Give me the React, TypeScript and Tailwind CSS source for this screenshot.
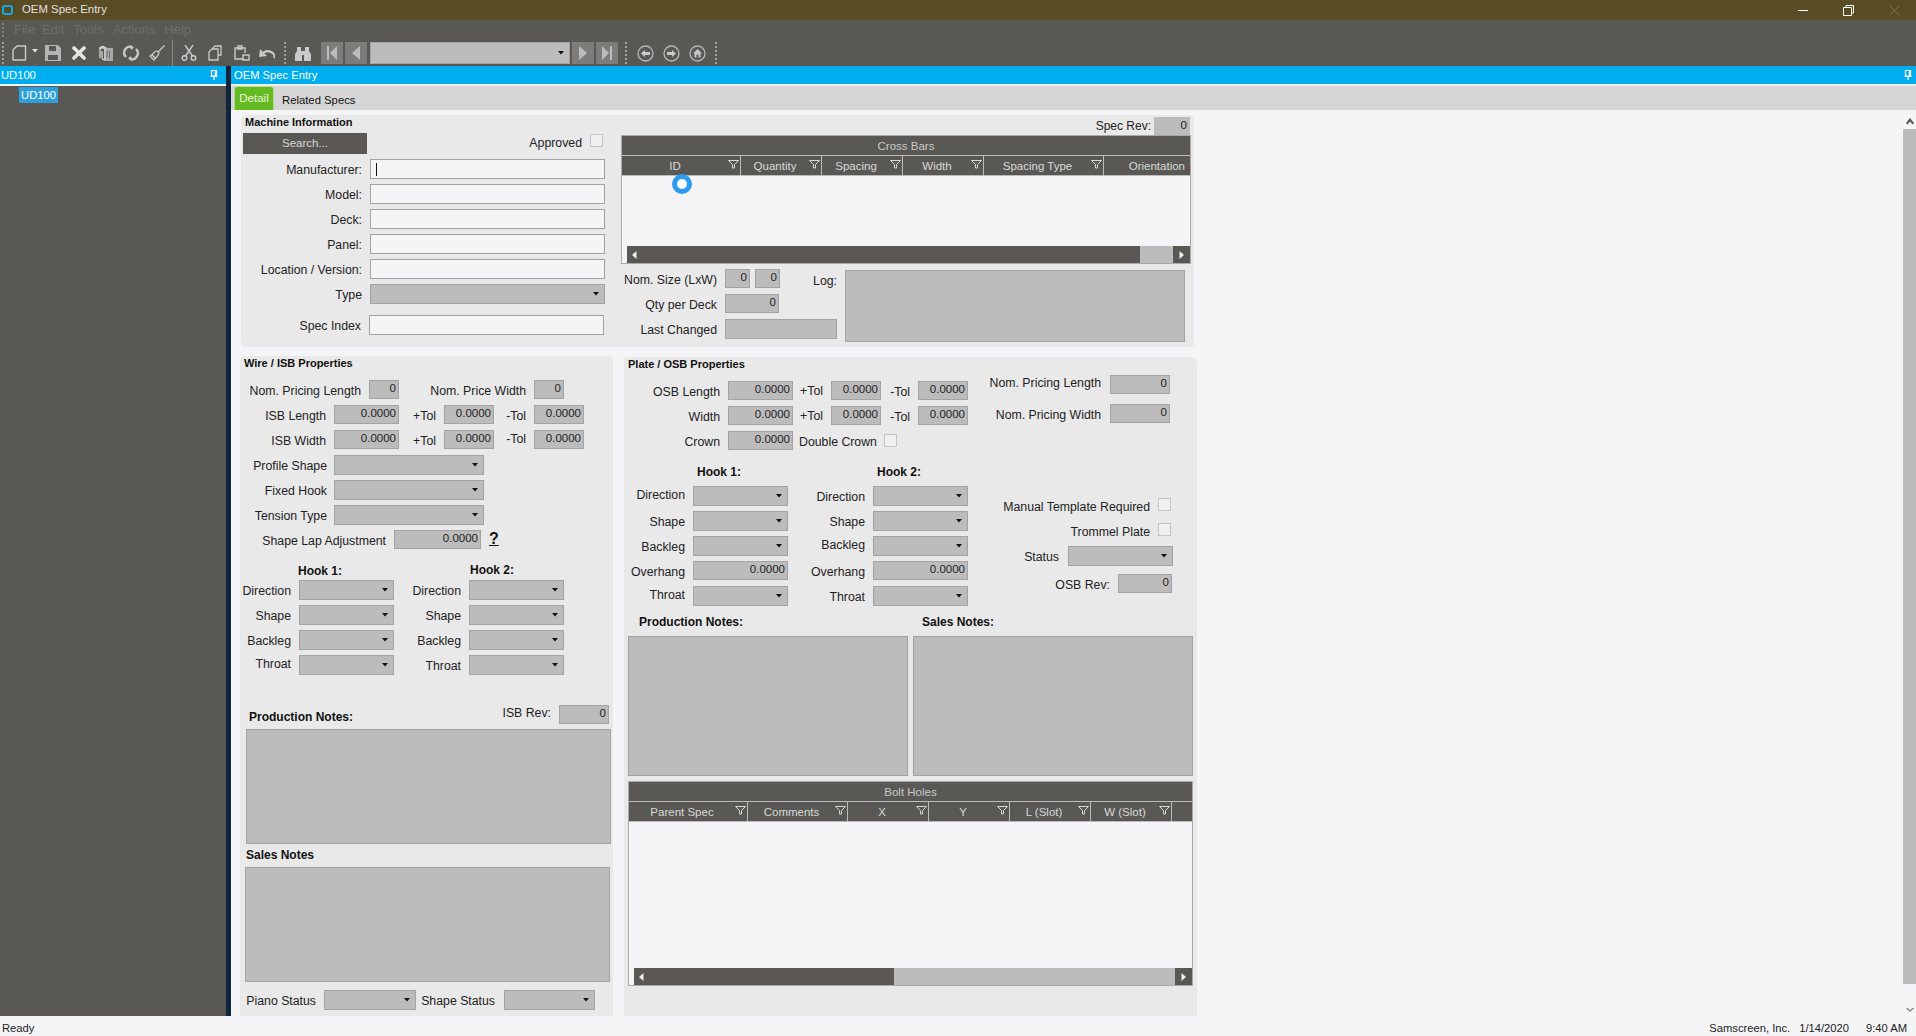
import React from "react";

const boxCls = "bg-[#bcbcbc] border border-[#a3a3a3] shrink-0 flex items-center justify-end pr-[2px] pb-[2px] text-[11.5px] text-[#222]";
const inputCls = "bg-[#f5f5f7] border border-[#a3a3a3] shrink-0 h-[20px]";
const labelCls = "text-right text-[12.3px] leading-[14px] pt-px text-[#222] shrink-0 whitespace-nowrap";
const boldCls = "font-bold text-[12px] leading-[14px] text-[#111] whitespace-nowrap";
const titleCls = "font-bold text-[11px] leading-[14px] text-[#111] whitespace-nowrap";

function Caret() {
  return (
    <svg width="6" height="4" viewBox="0 0 6 4" className="shrink-0">
      <path d="M0 0H6L3 3.5Z" fill="#111" />
    </svg>
  );
}
function Combo({ w }: { w: string }) {
  return (
    <div className={`${w} h-[20px] bg-[#bcbcbc] border border-[#a3a3a3] shrink-0 flex items-center justify-end pr-[5px]`}>
      <Caret />
    </div>
  );
}
function Box({ w, h = "h-[19px]", v }: { w: string; h?: string; v?: string }) {
  return <div className={`${w} ${h} ${boxCls}`}>{v}</div>;
}
function Check() {
  return <div className="w-[13px] h-[13px] bg-[#f0f0f2] border border-[#c4c4c4] shrink-0" />;
}
function Funnel() {
  return (
    <svg width="11" height="9" viewBox="0 0 11 9" className="shrink-0 mr-[1px] mb-[3px]">
      <path d="M.5.5h10L6.5 4.5V8h-2V4.5Z" fill="none" stroke="#d8d8d8" strokeWidth="1" />
    </svg>
  );
}
function Pin() {
  return (
    <svg width="8" height="10" viewBox="0 0 8 10" className="shrink-0">
      <path d="M1.5 .5h5v5.5h-5zM.5 6.5h7M4 6.5V10" fill="none" stroke="#fff" strokeWidth="1.2" />
      <path d="M4.8 1v5h1.4V1Z" fill="#fff" />
    </svg>
  );
}

type Col = { w: string; label: string; filter?: boolean; right?: boolean };

function Grid({ title, cols, cls, darkW, lightW, cursor }: { title: string; cols: Col[]; cls: string; darkW: string; lightW: string; cursor?: boolean }) {
  return (
    <div className={`${cls} border border-[#a9a9a9] flex flex-col shrink-0`}>
      <div className="h-[19px] shrink-0 bg-[#595855] pt-[2px] flex items-center justify-center text-[11.5px] text-[#c9c9c9]">{title}</div>
      <div className="h-[21px] shrink-0 bg-[#595855] border-y border-[#bcbcbc] flex">
        {cols.map((c, i) => (
          <div key={i} className={`${c.w} flex items-center border-r border-[#bcbcbc] last:border-r-0 shrink-0 text-[11.5px] text-[#d8d8d8] whitespace-nowrap`}>
            <span className={c.right ? "flex-1 text-right pr-[5px] pt-[2px]" : "flex-1 text-center pt-[2px]"}>{c.label}</span>
            {c.filter !== false && c.label ? <Funnel /> : null}
          </div>
        ))}
      </div>
      <div className="relative flex-1 bg-[#f5f5f7]">
        {cursor ? <div className="absolute top-[-2px] left-[50px] w-[20px] h-[20px] rounded-full border-[5px] border-[#2b9cf0] bg-white" /> : null}
      </div>
      <div className="h-[17px] shrink-0 flex">
        <div className="w-[5px] bg-[#f5f5f7]" />
        <div className={`${darkW} bg-[#595855] flex items-center pl-[5px]`}>
          <svg width="5" height="8" viewBox="0 0 5 8"><path d="M4.5 0V8L0 4Z" fill="#f0f0f0" /></svg>
        </div>
        <div className={`${lightW} bg-[#bcbcbc]`} />
        <div className="flex-1 bg-[#595855] flex items-center justify-center">
          <svg width="5" height="8" viewBox="0 0 5 8"><path d="M.5 0V8L5 4Z" fill="#f0f0f0" /></svg>
        </div>
      </div>
    </div>
  );
}

function Grip() {
  return <div className="w-[2px] h-[22px] shrink-0 border-l-2 border-dotted border-[#a0a09e]" />;
}

const ico = "#c9c9c9";
function ToolIcons1() {
  return (
    <>
      <svg width="15" height="16" viewBox="0 0 15 16" className="ml-[8px] shrink-0"><path d="M1 5 5 1h8.500v14H1Z" fill="none" stroke={ico} strokeWidth="1.400" /></svg>
      <svg width="6" height="4" viewBox="0 0 6 4" className="ml-[5px] mb-[4px] shrink-0"><path d="M0 0H6L3 3.500Z" fill="#e0e0e0" /></svg>
      <svg width="16" height="16" viewBox="0 0 16 16" className="ml-[7px] shrink-0"><path d="M0 0H13L16 3V16H0ZM4 1V6H11V1ZM3 10V15H13V10Z" fill="#b5b5b5" fillRule="evenodd" /></svg>
      <svg width="14" height="14" viewBox="0 0 14 14" className="ml-[11px] shrink-0"><path d="M2 2 12 12M12 2 2 12" stroke="#e4e4e4" strokeWidth="3.600" strokeLinecap="round" /></svg>
      <svg width="15" height="16" viewBox="0 0 15 16" className="ml-[12px] shrink-0"><path d="M6 3h9v13H6Z" fill="#a8a8a8" /><path d="M2 4v9M2 4a2.500 2.500 0 0 1 5 0v9a1.500 1.500 0 0 1-3 0V6M1 3h8" fill="none" stroke="#d0d0d0" strokeWidth="1.300" /><path d="M9 6v7M11.500 6v7" stroke="#6a6a68" /></svg>
      <svg width="16" height="16" viewBox="0 0 16 16" className="ml-[10px] shrink-0"><path d="M3 12A6 6 0 0 1 9 2M13 4a6 6 0 0 1-6 10" fill="none" stroke={ico} strokeWidth="2.400" /><path d="M7 0l4 2.500L8 5ZM9 16l-4-2.500L8 11Z" fill={ico} /></svg>
      <svg width="16" height="16" viewBox="0 0 16 16" className="ml-[10px] shrink-0"><path d="M15.500.500 9 7M7.500 5.500l3 3M7 6 1 11l4 4 5-6M3 9.500 6 13" fill="none" stroke={ico} strokeWidth="1.300" /></svg>
      <div className="w-px h-[26px] bg-[#8a8a88] ml-[7px] shrink-0" />
      <svg width="16" height="16" viewBox="0 0 16 16" className="ml-[8px] shrink-0"><circle cx="3.500" cy="13" r="2.300" fill="none" stroke={ico} strokeWidth="1.400" /><circle cx="12.500" cy="13" r="2.300" fill="none" stroke={ico} strokeWidth="1.400" /><path d="M4.500 11 12 0M11.500 11 4 0" stroke={ico} strokeWidth="1.400" /></svg>
      <svg width="14" height="16" viewBox="0 0 14 16" className="ml-[11px] shrink-0"><path d="M4 4 7 1h6v9H10M1 7l3-3h6v11H1Z" fill="none" stroke={ico} strokeWidth="1.300" /></svg>
      <svg width="16" height="16" viewBox="0 0 16 16" className="ml-[12px] shrink-0"><path d="M10 14H1V3h10v5M4 1h4v3H4ZM9 10h6v5H9Z" fill="none" stroke={ico} strokeWidth="1.400" /></svg>
      <svg width="16" height="12" viewBox="0 0 16 12" className="ml-[9px] shrink-0"><path d="M4 6A6.500 5 0 0 1 15 11" fill="none" stroke={ico} strokeWidth="2" /><path d="M0 10 1 2 8 9Z" fill={ico} /></svg>
    </>
  );
}

const navBtn = "w-[22px] h-[22px] bg-[#7d7c7a] flex items-center justify-center shrink-0";
function Circle({ d, cls }: { d: string; cls: string }) {
  return (
    <svg width="17" height="17" viewBox="0 0 17 17" className={`${cls} shrink-0`}>
      <circle cx="8.500" cy="8.500" r="7.500" fill="none" stroke="#b5b5b5" strokeWidth="1.300" />
      <path d={d} fill="#c9c9c9" />
    </svg>
  );
}

export default function App() {
  return (
    <div className="w-[1916px] h-[1036px] overflow-hidden flex flex-col bg-[#f5f5f7] font-['Liberation_Sans',Arial,sans-serif]">
      {/* title bar */}
      <div className="h-[20px] shrink-0 bg-[#594b23] flex items-center">
        <div className="ml-[2px] w-[11px] h-[10px] rounded-[3px] border-2 border-[#12a8e8] shrink-0" />
        <span className="ml-[9px] text-[11.4px] text-[#e2e2e2]">OEM Spec Entry</span>
        <div className="ml-auto flex items-center">
          <div className="w-[10px] h-px bg-white" />
          <svg width="11" height="11" viewBox="0 0 11 11" className="ml-[35px]"><path d="M3 2.500V.5h7.500V8H8.500M.5 2.500h8v8h-8Z" fill="none" stroke="#fff" /></svg>
          <svg width="11" height="11" viewBox="0 0 11 11" className="ml-[35px] mr-[16px]"><path d="M.5.5l10 10M10.500.5l-10 10" stroke="#7d7350" /></svg>
        </div>
      </div>
      {/* menu bar */}
      <div className="h-[20px] shrink-0 bg-[#595855] flex items-center text-[13px] text-[#6f6e6b]">
        <div className="ml-[2px] w-[2px] h-[14px] border-l-2 border-dotted border-[#7d7c7a]" />
        <span className="ml-[10px]">File</span>
        <span className="ml-[7px]">Edit</span>
        <span className="ml-[9px]">Tools</span>
        <span className="ml-[9px]">Actions</span>
        <span className="ml-[9px]">Help</span>
      </div>
      {/* toolbar */}
      <div className="h-[26px] shrink-0 bg-[#595855] flex items-center">
        <div className="ml-[2px]"><Grip /></div>
        <ToolIcons1 />
        <div className="ml-[9px]"><Grip /></div>
        <svg width="16" height="15" viewBox="0 0 16 15" className="ml-[9px] shrink-0"><path d="M2 1h4v4h4V1h4v4l2 3v7H9V9H7v6H0V8l2-3Z" fill={ico} /></svg>
        <div className={`${navBtn} ml-[10px]`}><svg width="10" height="14" viewBox="0 0 10 14"><path d="M0 0h2v14H0ZM10 0v14L3 7Z" fill="#bcbcbc" /></svg></div>
        <div className={`${navBtn} ml-[2px]`}><svg width="8" height="14" viewBox="0 0 8 14"><path d="M8 0v14L0 7Z" fill="#bcbcbc" /></svg></div>
        <div className="ml-[3px] w-[200px] h-[22px] bg-[#bcbcbc] border border-[#a3a3a3] flex items-center justify-end pr-[5px] shrink-0"><Caret /></div>
        <div className={`${navBtn} ml-[2px]`}><svg width="8" height="14" viewBox="0 0 8 14"><path d="M0 0v14L8 7Z" fill="#bcbcbc" /></svg></div>
        <div className={`${navBtn} ml-[2px]`}><svg width="10" height="14" viewBox="0 0 10 14"><path d="M8 0h2v14H8ZM0 0v14L7 7Z" fill="#bcbcbc" /></svg></div>
        <div className="ml-[7px]"><Grip /></div>
        <Circle cls="ml-[10px]" d="M4 8.500 8 5v2h5v3H8v2Z" />
        <Circle cls="ml-[9px]" d="M13 8.500 9 5v2H4v3h5v2Z" />
        <Circle cls="ml-[9px]" d="M8.500 4 13 8.500h-1.500V12.500h-2v-3h-2v3h-2V8.500H4Z" />
        <div className="ml-[9px]"><Grip /></div>
      </div>

      {/* body */}
      <div className="flex-1 flex min-h-0">
        {/* left pane */}
        <div className="w-[226px] shrink-0 flex flex-col bg-[#595855]">
          <div className="h-[18px] shrink-0 bg-[#00adef] flex items-center justify-between pl-px pr-[8px] text-[11.2px] text-white">
            <span>UD100</span>
            <Pin />
          </div>
          <div className="h-[2px] shrink-0 bg-[#f5f5f7]" />
          <div className="ml-[19px] mt-px w-[39px] h-[16px] bg-[#2d9fdb] flex items-center justify-center text-[11.2px] text-white">UD100</div>
        </div>
        <div className="w-[5px] shrink-0 bg-[#10253a]" />

        {/* right pane */}
        <div className="flex-1 flex flex-col min-w-0">
          <div className="h-[18px] shrink-0 bg-[#00adef] flex items-center justify-between pl-[3px] pr-[4px] text-[11.2px] text-white">
            <span>OEM Spec Entry</span>
            <Pin />
          </div>
          <div className="h-[2px] shrink-0 bg-[#f0f0f0]" />
          <div className="h-[24px] shrink-0 bg-[#d6d6d6] flex items-stretch pl-[3px]">
            <div className="w-[40px] rounded-t-[3px] bg-[#66bb22] border border-b-0 border-[#b5dc92] flex items-center justify-center text-[11.5px] text-[#e8f5dc]">Detail</div>
            <span className="ml-[8px] self-center mt-[4px] text-[11.3px] text-[#111]">Related Specs</span>
          </div>

          {/* content */}
          <div className="flex-1 flex min-h-0">
            <div className="flex-1 min-w-0 pl-[9px] pt-[5px]">
              {/* Machine Information */}
              <div className="ml-px w-[953px] h-[232px] rounded-[4px] bg-[#e9e9e9] flex">
                <div className="w-[380px] shrink-0">
                  <div className={`${titleCls} h-[14px] pl-[4px]`}>Machine Information</div>
                  <div className="mt-[4px] h-[21px] flex items-start">
                    <div className="ml-[2px] w-[124px] h-[21px] bg-[#595855] flex items-center justify-center text-[11.5px] text-[#d6d6d6]">Search...</div>
                    <span className={`${labelCls} ml-auto mr-[8px] mt-[2px]`}>Approved</span>
                    <div className="mt-px mr-[18px]"><Check /></div>
                  </div>
                  <div className="mt-[5px]">
                    {["Manufacturer:", "Model:", "Deck:", "Panel:", "Location / Version:"].map((l, i) => (
                      <div key={l} className="h-[25px] flex items-start">
                        <span className={`${labelCls} w-[121px] mt-[3px]`}>{l}</span>
                        <div className={`${inputCls} ml-[8px] w-[235px] flex items-center pl-[5px]`}>
                          {i === 0 ? <div className="w-px h-[13px] bg-[#111]" /> : null}
                        </div>
                      </div>
                    ))}
                    <div className="h-[25px] flex items-start">
                      <span className={`${labelCls} w-[121px] mt-[3px]`}>Type</span>
                      <div className="ml-[8px]"><Combo w="w-[235px]" /></div>
                    </div>
                    <div className="mt-[6px] h-[20px] flex items-start">
                      <span className={`${labelCls} w-[120px] mt-[3px]`}>Spec Index</span>
                      <div className={`${inputCls} ml-[8px] w-[235px]`} />
                    </div>
                  </div>
                </div>
                <div className="flex-1 min-w-0">
                  <div className="pt-[2px] h-[20px] flex items-start justify-end pr-[4px]">
                    <span className={`${labelCls} mr-[3px] mt-[1px] text-[12px]`}>Spec Rev:</span>
                    <div className="w-[36px] h-[18px] bg-[#bcbcbc] flex items-center justify-end pr-[3px] text-[11.5px] text-[#222]">0</div>
                  </div>
                  <Grid
                    title="Cross Bars"
                    cursor
                    cls="w-[570px] h-[129px]"
                    darkW="w-[513px]"
                    lightW="w-[33px]"
                    cols={[
                      { w: "w-[119px]", label: "ID" },
                      { w: "w-[81px]", label: "Quantity" },
                      { w: "w-[81px]", label: "Spacing" },
                      { w: "w-[81px]", label: "Width" },
                      { w: "w-[120px]", label: "Spacing Type" },
                      { w: "flex-1", label: "Orientation", filter: false, right: true },
                    ]}
                  />
                  <div className="mt-[5px] flex">
                    <div className="w-[224px] shrink-0">
                      <div className="h-[19px] flex items-start">
                        <span className={`${labelCls} w-[96px] mt-[3px]`}>Nom. Size (LxW)</span>
                        <div className="ml-[8px]"><Box w="w-[25px]" v="0" /></div>
                        <div className="ml-[5px]"><Box w="w-[25px]" v="0" /></div>
                        <span className={`${labelCls} w-[57px] mt-[4px]`}>Log:</span>
                      </div>
                      <div className="mt-[6px] h-[19px] flex items-start">
                        <span className={`${labelCls} w-[96px] mt-[3px]`}>Qty per Deck</span>
                        <div className="ml-[8px]"><Box w="w-[54px]" v="0" /></div>
                      </div>
                      <div className="mt-[6px] h-[20px] flex items-start">
                        <span className={`${labelCls} w-[96px] mt-[3px]`}>Last Changed</span>
                        <div className="ml-[8px]"><Box w="w-[112px]" h="h-[20px]" /></div>
                      </div>
                    </div>
                    <div className="mt-px w-[340px] h-[72px] bg-[#bcbcbc] border border-[#a3a3a3]" />
                  </div>
                </div>
              </div>

              {/* lower panels */}
              <div className="mt-[9px] flex items-start">
                {/* Wire / ISB */}
                <div className="w-[373px] h-[661px] rounded-t-[4px] bg-[#e9e9e9] shrink-0">
                  <div className={`${titleCls} h-[14px] pl-[4px]`}>Wire / ISB Properties</div>
                  <div className="mt-[10px] h-[25px] flex items-start">
                    <span className={`${labelCls} w-[121px] mt-[3px]`}>Nom. Pricing Length</span>
                    <div className="ml-[8px]"><Box w="w-[30px]" v="0" /></div>
                    <span className={`${labelCls} w-[127px] mt-[3px]`}>Nom. Price Width</span>
                    <div className="ml-[8px]"><Box w="w-[30px]" v="0" /></div>
                  </div>
                  {["ISB Length", "ISB Width"].map((l, i) => (
                    <div key={l} className="h-[25px] flex items-start">
                      <span className={`${labelCls} w-[86px] mt-[3px]`}>{l}</span>
                      <div className="ml-[8px]"><Box w="w-[65px]" v="0.0000" /></div>
                      <span className={`${labelCls} w-[37px] mt-[3px]`}>+Tol</span>
                      <div className="ml-[8px]"><Box w="w-[50px]" v="0.0000" /></div>
                      <span className={`${labelCls} w-[32px] ${i === 1 ? "mt-px" : "mt-[3px]"}`}>-Tol</span>
                      <div className="ml-[8px]"><Box w="w-[50px]" v="0.0000" /></div>
                    </div>
                  ))}
                  {["Profile Shape", "Fixed Hook", "Tension Type"].map((l) => (
                    <div key={l} className="h-[25px] flex items-start">
                      <span className={`${labelCls} w-[87px] mt-[3px]`}>{l}</span>
                      <div className="ml-[7px]"><Combo w="w-[150px]" /></div>
                    </div>
                  ))}
                  <div className="h-[33px] flex items-start">
                    <span className={`${labelCls} w-[146px] mt-[3px]`}>Shape Lap Adjustment</span>
                    <div className="ml-[8px]"><Box w="w-[87px]" v="0.0000" /></div>
                    <span className="ml-[8px] text-[16px] leading-[18px] font-bold underline text-[#111]">?</span>
                  </div>
                  <div className="h-[17px] flex items-start">
                    <span className={`${boldCls} w-[172px] pl-[58px] mt-px`}>Hook 1:</span>
                    <span className={`${boldCls} pl-[58px]`}>Hook 2:</span>
                  </div>
                  {["Direction", "Shape", "Backleg", "Throat"].map((l) => (
                    <div key={l} className="h-[25px] flex items-start">
                      <span className={`${labelCls} w-[51px] ${l === "Throat" ? "mt-px" : "mt-[3px]"}`}>{l}</span>
                      <div className="ml-[8px]"><Combo w="w-[95px]" /></div>
                      <span className={`${labelCls} w-[67px] mt-[3px]`}>{l}</span>
                      <div className="ml-[8px]"><Combo w="w-[95px]" /></div>
                    </div>
                  ))}
                  <div className="mt-[25px] h-[24px] flex items-start">
                    <span className={`${boldCls} ml-[9px] mt-[5px]`}>Production Notes:</span>
                    <span className={`${labelCls} ml-auto mr-[8px]`}>ISB Rev:</span>
                    <div className="mr-[4px]"><Box w="w-[50px]" v="0" /></div>
                  </div>
                  <div className="ml-[6px] w-[365px] h-[115px] bg-[#bcbcbc] border border-[#a3a3a3]" />
                  <div className={`${boldCls} mt-[4px] h-[14px] pl-[6px]`}>Sales Notes</div>
                  <div className="mt-[5px] ml-[5px] w-[365px] h-[115px] bg-[#bcbcbc] border border-[#a3a3a3]" />
                  <div className="mt-[8px] flex items-center">
                    <span className={`${labelCls} ml-[5px] w-[71px] mr-[8px]`}>Piano Status</span>
                    <Combo w="w-[92px]" />
                    <span className={`${labelCls} ml-[5px] w-[74px] mr-[9px]`}>Shape Status</span>
                    <Combo w="w-[91px]" />
                  </div>
                </div>

                {/* Plate / OSB */}
                <div className="ml-[11px] mt-px w-[573px] h-[660px] rounded-t-[4px] bg-[#e9e9e9] shrink-0">
                  <div className={`${titleCls} h-[14px] pl-[4px]`}>Plate / OSB Properties</div>
                  <div className="flex h-[79px]">
                    <div className="w-[365px] shrink-0 pt-[10px]">
                      {["OSB Length", "Width"].map((l) => (
                        <div key={l} className="h-[25px] flex items-start">
                          <span className={`${labelCls} w-[96px] mt-[3px]`}>{l}</span>
                          <div className="ml-[8px]"><Box w="w-[65px]" v="0.0000" /></div>
                          <span className={`${labelCls} w-[30px] mt-[2px]`}>+Tol</span>
                          <div className="ml-[8px]"><Box w="w-[50px]" v="0.0000" /></div>
                          <span className={`${labelCls} w-[29px] mt-[3px]`}>-Tol</span>
                          <div className="ml-[8px]"><Box w="w-[50px]" v="0.0000" /></div>
                        </div>
                      ))}
                      <div className="h-[19px] flex items-start">
                        <span className={`${labelCls} w-[96px] mt-[3px]`}>Crown</span>
                        <div className="ml-[8px]"><Box w="w-[65px]" v="0.0000" /></div>
                        <span className={`${labelCls} ml-[6px] mt-[3px]`}>Double Crown</span>
                        <div className="ml-[7px] mt-[3px]"><Check /></div>
                      </div>
                    </div>
                    <div className="flex-1 pt-[4px]">
                      <div className="h-[19px] flex items-start">
                        <span className={`${labelCls} w-[112px]`}>Nom. Pricing Length</span>
                        <div className="ml-[9px]"><Box w="w-[60px]" v="0" /></div>
                      </div>
                      <div className="mt-[10px] h-[19px] flex items-start">
                        <span className={`${labelCls} w-[112px] mt-[3px]`}>Nom. Pricing Width</span>
                        <div className="ml-[9px]"><Box w="w-[60px]" v="0" /></div>
                      </div>
                    </div>
                  </div>
                  <div className="flex h-[156px]">
                    <div className="w-[365px] shrink-0 pt-[15px]">
                      <div className="h-[21px] flex items-start">
                        <span className={`${boldCls} w-[180px] pl-[73px]`}>Hook 1:</span>
                        <span className={`${boldCls} pl-[73px]`}>Hook 2:</span>
                      </div>
                      {["Direction", "Shape", "Backleg"].map((l, i) => (
                        <div key={l} className="h-[25px] flex items-start">
                          <span className={`${labelCls} w-[61px] ${i === 0 ? "mt-px" : "mt-[3px]"}`}>{l}</span>
                          <div className="ml-[8px]"><Combo w="w-[95px]" /></div>
                          <span className={`${labelCls} w-[77px] ${i === 2 ? "mt-px" : "mt-[3px]"}`}>{l}</span>
                          <div className="ml-[8px]"><Combo w="w-[95px]" /></div>
                        </div>
                      ))}
                      <div className="h-[25px] flex items-start">
                        <span className={`${labelCls} w-[61px] mt-[3px]`}>Overhang</span>
                        <div className="ml-[8px]"><Box w="w-[95px]" v="0.0000" /></div>
                        <span className={`${labelCls} w-[77px] mt-[3px]`}>Overhang</span>
                        <div className="ml-[8px]"><Box w="w-[95px]" v="0.0000" /></div>
                      </div>
                      <div className="h-[20px] flex items-start">
                        <span className={`${labelCls} w-[61px] mt-px`}>Throat</span>
                        <div className="ml-[8px]"><Combo w="w-[95px]" /></div>
                        <span className={`${labelCls} w-[77px] mt-[3px]`}>Throat</span>
                        <div className="ml-[8px]"><Combo w="w-[95px]" /></div>
                      </div>
                    </div>
                    <div className="flex-1 pt-[48px]">
                      <div className="h-[13px] flex items-start">
                        <span className={`${labelCls} w-[161px] mt-px`}>Manual Template Required</span>
                        <div className="ml-[8px]"><Check /></div>
                      </div>
                      <div className="mt-[12px] h-[13px] flex items-start">
                        <span className={`${labelCls} w-[161px] mt-px`}>Trommel Plate</span>
                        <div className="ml-[8px]"><Check /></div>
                      </div>
                      <div className="mt-[10px] h-[20px] flex items-center">
                        <span className={`${labelCls} w-[70px]`}>Status</span>
                        <div className="ml-[9px]"><Combo w="w-[105px]" /></div>
                      </div>
                      <div className="mt-[8px] h-[19px] flex items-start">
                        <span className={`${labelCls} w-[121px] mt-[3px]`}>OSB Rev:</span>
                        <div className="ml-[8px]"><Box w="w-[54px]" v="0" /></div>
                      </div>
                    </div>
                  </div>
                  <div className="mt-[9px] h-[14px] flex">
                    <span className={`${boldCls} w-[298px] pl-[15px]`}>Production Notes:</span>
                    <span className={boldCls}>Sales Notes:</span>
                  </div>
                  <div className="mt-[7px] ml-[4px] flex gap-[5px]">
                    <div className="w-[280px] h-[140px] bg-[#bcbcbc] border border-[#a3a3a3]" />
                    <div className="w-[280px] h-[140px] bg-[#bcbcbc] border border-[#a3a3a3]" />
                  </div>
                  <div className="mt-[5px] ml-[4px]">
                    <Grid
                      title="Bolt Holes"
                      cls="w-[565px] h-[205px]"
                      darkW="w-[260px]"
                      lightW="w-[281px]"
                      cols={[
                        { w: "w-[119px]", label: "Parent Spec" },
                        { w: "w-[100px]", label: "Comments" },
                        { w: "w-[81px]", label: "X" },
                        { w: "w-[81px]", label: "Y" },
                        { w: "w-[81px]", label: "L (Slot)" },
                        { w: "w-[81px]", label: "W (Slot)" },
                        { w: "flex-1", label: "" },
                      ]}
                    />
                  </div>
                </div>
              </div>
            </div>

            {/* scrollbar */}
            <div className="w-[13px] shrink-0 flex flex-col items-center bg-[#f5f5f7]">
              <svg width="8" height="7" viewBox="0 0 8 7" className="mt-[8px] shrink-0"><path d="M0 5 4 0l4 5-1.500 1.500L4 3.500 1.500 6.500Z" fill="#595855" /></svg>
              <div className="mt-[4px] w-full h-[855px] bg-[#bcbcbc]" />
              <svg width="8" height="5" viewBox="0 0 8 5" className="mt-[23px] shrink-0"><path d="M0 1.500 1 .5 4 3 7 .5l1 1L4 5Z" fill="#8a8a88" /></svg>
            </div>
          </div>
        </div>
      </div>

      {/* status bar */}
      <div className="h-[20px] shrink-0 bg-[#f5f5f7] flex items-center text-[11.2px] text-[#222] pt-[5px] pl-[2px] pr-[9px]">
        <span>Ready</span>
        <span className="ml-auto">Samscreen, Inc.</span>
        <span className="ml-[9px]">1/14/2020</span>
        <span className="ml-[17px]">9:40 AM</span>
      </div>
    </div>
  );
}
